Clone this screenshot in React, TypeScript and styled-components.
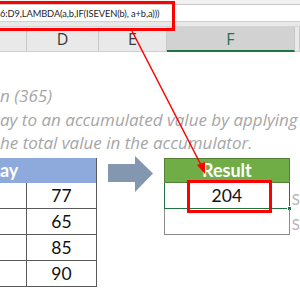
import React from "react";
import styled, { createGlobalStyle, css } from "styled-components";

const GlobalStyle = createGlobalStyle`
  html, body { margin: 0; padding: 0; width: 300px; height: 300px; overflow: hidden; background: #fff; }
  #root { width: 300px; height: 300px; }
  * { box-sizing: border-box; }
`;

const Screen = styled.div`
  position: relative;
  width: 300px;
  height: 300px;
  overflow: hidden;
  background: #fff;
  font-family: Lato, "Open Sans", sans-serif;
`;

const TopStrip = styled.div`
  height: 5px;
  background: #f1f1f1;
  border-bottom: 1px solid #c9c9c9;
`;

const FormulaBar = styled.div`
  height: 17px;
  background: #fff;
  display: flex;
  align-items: center;
  padding-left: 0;
  font-family: Lato, sans-serif;
  font-size: 9.3px;
  letter-spacing: -0.1px;
  color: #262626;
  white-space: nowrap;
  border-bottom: 1px solid #d0d0d0;
`;

const BarGap = styled.div`
  height: 5px;
  background: #e8e8e8;
  border-bottom: 1px solid #d6d6d6;
`;

const ColumnHeaders = styled.div`
  display: grid;
  grid-template-columns: 27px 72px 68px 128px 1fr;
  height: 25px;
  background: #e9e9e9;
`;

const ColHeader = styled.div<{ $selected?: boolean }>`
  display: flex;
  align-items: center;
  justify-content: center;
  border-right: 1px solid #c8c8c8;
  border-bottom: 1px solid #d0d0d0;
  font-family: "Open Sans", sans-serif;
  font-size: 16px;
  color: #3a3a3a;
  ${(p) =>
    p.$selected &&
    css`
      background: #d2d2d2;
      color: #217346;
      border-bottom: 2px solid #217346;
    `}
`;

const Sheet = styled.div`
  padding-top: 32px;
`;

const Description = styled.div`
  font-family: "Open Sans", sans-serif;
  font-style: italic;
  font-weight: 400;
  font-size: 17px;
  line-height: 23.5px;
  color: #a6a6a6;
  white-space: nowrap;
`;

const TablesRow = styled.div`
  display: flex;
  align-items: flex-start;
  margin-top: 3px;
`;

const LeftTable = styled.div`
  width: 99px;
  border-right: 1px solid #5a5a5a;
`;

const BlueHeader = styled.div`
  height: 25px;
  background: #8ea9db;
  color: #fff;
  font-weight: 700;
  font-size: 18px;
  display: flex;
  align-items: center;
  padding-left: 0;
`;

const DataRow = styled.div`
  display: grid;
  grid-template-columns: 27px 1fr;
  height: 26px;
  border-bottom: 1px solid #5a5a5a;
`;

const Cell = styled.div<{ $divider?: boolean }>`
  display: flex;
  align-items: center;
  justify-content: center;
  font-size: 17.5px;
  color: #111;
  ${(p) => p.$divider && css`border-right: 1px solid #5a5a5a;`}
`;

const ArrowShape = styled.svg`
  display: block;
  margin-left: 11px;
  margin-top: -2px;
  flex: none;
`;

const ResultTable = styled.div`
  margin-left: 11px;
  width: 129px;
`;

const GreenHeader = styled.div`
  height: 25px;
  background: #70ad47;
  border: 1px solid #548235;
  color: #fff;
  font-weight: 700;
  font-size: 18px;
  display: flex;
  align-items: center;
  justify-content: center;
`;

const ResultRow = styled.div<{ $active?: boolean }>`
  position: relative;
  height: 26px;
  display: flex;
  align-items: center;
  justify-content: center;
  font-size: 17.5px;
  color: #111;
  border-left: 1px solid ${(p) => (p.$active ? "#217346" : "#8c8c8c")};
  border-right: 1px solid ${(p) => (p.$active ? "#217346" : "#8c8c8c")};
  border-bottom: 1px solid ${(p) => (p.$active ? "#217346" : "#8c8c8c")};
`;

const HighlightBox = styled.div`
  position: absolute;
  left: 22px;
  top: -3px;
  width: 85px;
  height: 33px;
  border: 3px solid #ff0000;
`;

const FillHandle = styled.div`
  position: absolute;
  right: -3px;
  bottom: -3px;
  width: 5px;
  height: 5px;
  background: #217346;
  border: 1px solid #fff;
`;

const NoteColumn = styled.div`
  margin-left: 2px;
  padding-top: 33px;
  display: flex;
  flex-direction: column;
  gap: 8px;
  font-size: 15px;
  line-height: 17px;
  color: #b5b5b5;
`;

const FormulaHighlight = styled.div`
  position: absolute;
  left: -4px;
  top: 1px;
  width: 179px;
  height: 30px;
  border: 3px solid #ff0000;
  pointer-events: none;
`;

const Pointer = styled.svg`
  position: absolute;
  left: 0;
  top: 0;
  pointer-events: none;
`;

const values = [77, 65, 85, 90];

export default function App() {
  return (
    <>
      <GlobalStyle />
      <Screen>
        <TopStrip />
        <FormulaBar>6:D9,LAMBDA(a,b,IF(ISEVEN(b), a+b,a)))</FormulaBar>
        <BarGap />
        <ColumnHeaders>
          <ColHeader />
          <ColHeader>D</ColHeader>
          <ColHeader>E</ColHeader>
          <ColHeader $selected>F</ColHeader>
          <ColHeader />
        </ColumnHeaders>
        <Sheet>
          <Description>
            <div>n (365)</div>
            <div>ay to an accumulated value by applying</div>
            <div>he total value in the accumulator.</div>
          </Description>
          <TablesRow>
            <LeftTable>
              <BlueHeader>ay</BlueHeader>
              {values.map((v) => (
                <DataRow key={v}>
                  <Cell $divider />
                  <Cell>{v}</Cell>
                </DataRow>
              ))}
            </LeftTable>
            <ArrowShape width="45" height="37" viewBox="0 0 45 37">
              <polygon points="0,8 27,8 27,0 45,17.5 27,36 27,26 0,26" fill="#8497b0" />
            </ArrowShape>
            <ResultTable>
              <GreenHeader>Result</GreenHeader>
              <ResultRow $active>
                204
                <HighlightBox />
                <FillHandle />
              </ResultRow>
              <ResultRow />
            </ResultTable>
            <NoteColumn>
              <span>S</span>
              <span>S</span>
            </NoteColumn>
          </TablesRow>
        </Sheet>
        <FormulaHighlight />
        <Pointer width="300" height="300" viewBox="0 0 300 300">
          <line x1="132" y1="31" x2="201" y2="165" stroke="#ff0000" strokeWidth="1.5" />
          <polygon points="205,174 197,165 205,162" fill="#ff0000" />
        </Pointer>
      </Screen>
    </>
  );
}
